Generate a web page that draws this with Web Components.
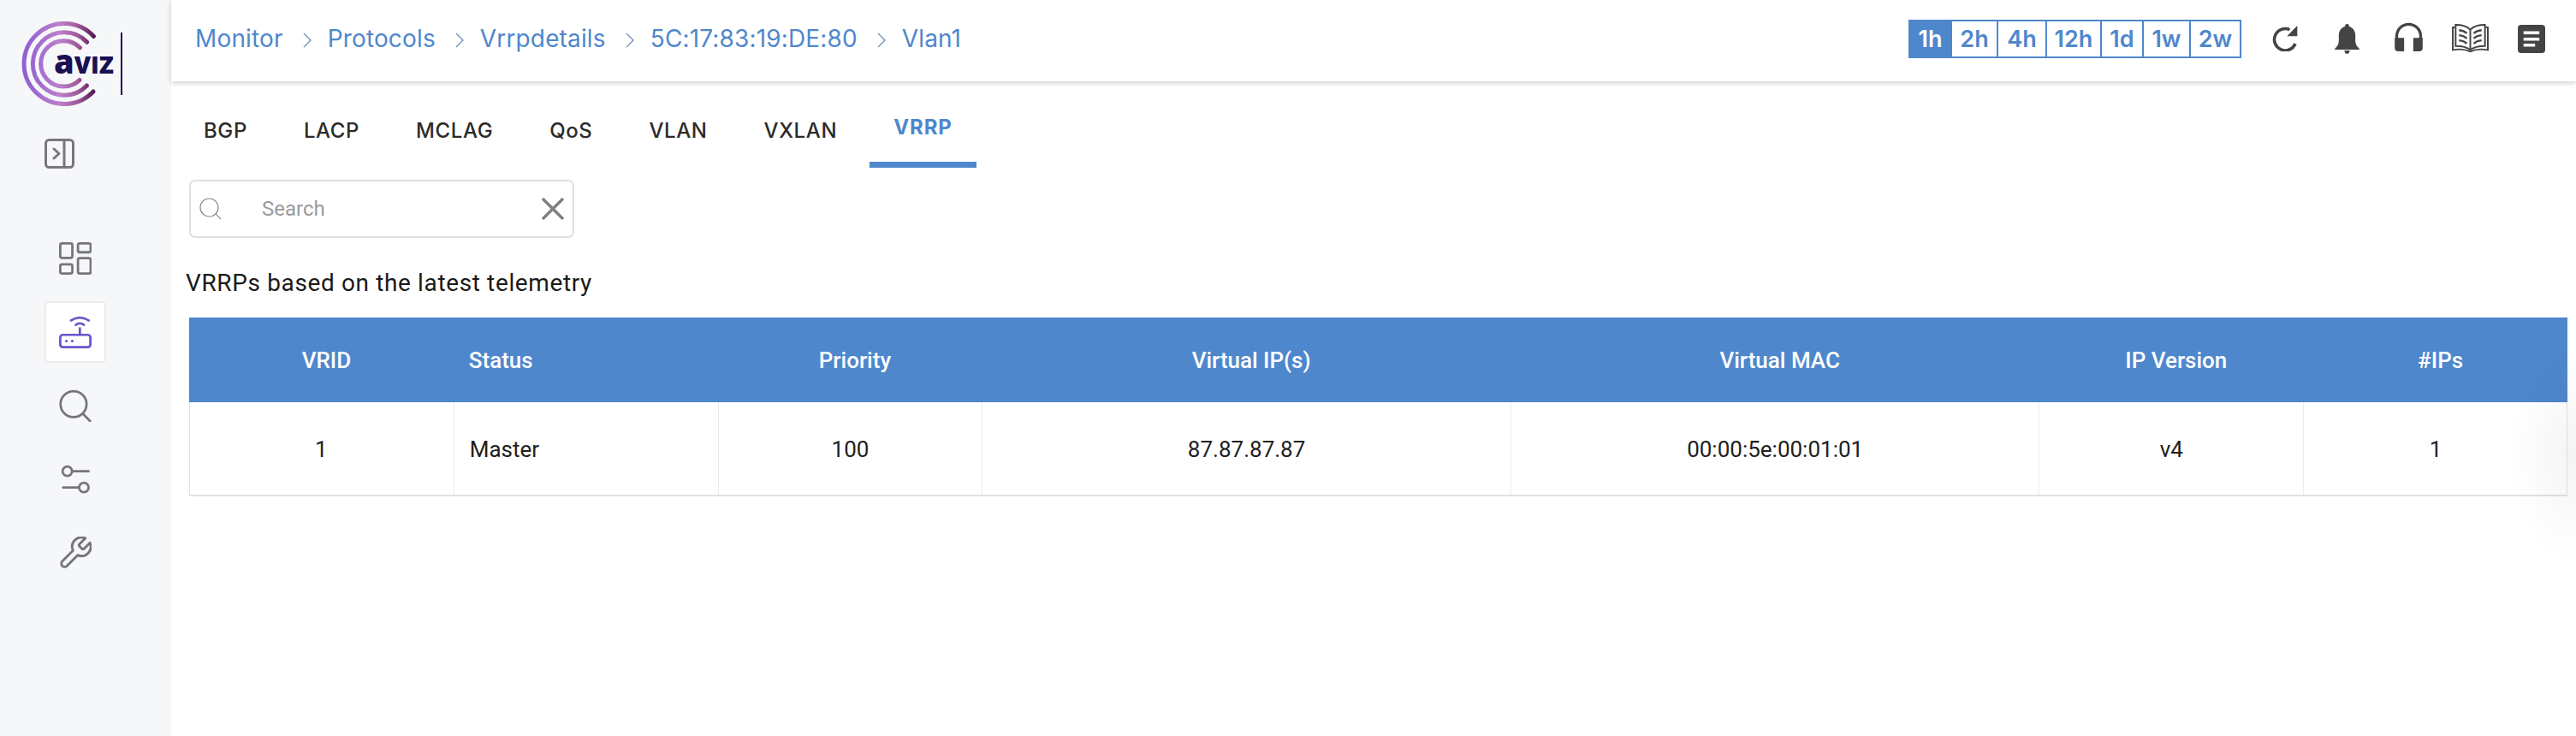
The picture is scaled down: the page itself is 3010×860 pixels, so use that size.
<!DOCTYPE html>
<html lang="en">
<head>
<meta charset="utf-8">
<title>VRRP</title>
<style>
  html, body { margin: 0; height: 100%; background: #fff; overflow: hidden; }
</style>
</head>
<body>
<app-shell>
  <side-bar slot="side"></side-bar>
  <top-bar slot="top"></top-bar>
  <proto-tabs></proto-tabs>
  <search-box></search-box>
  <h-line>VRRPs based on the latest telemetry</h-line>
  <vrrp-table></vrrp-table>
</app-shell>

<script>
class AppShell extends HTMLElement {
  constructor() {
    super();
    this.shadowDOM = this.attachShadow({ mode: "open" });
  }
  connectedCallback() {
    this.shadowDOM.innerHTML = `
    <style>
      :host { display: flex; width: 100%; height: 860px; overflow: hidden; }
      .side { flex: 0 0 200px; }
      .main { flex: 1; min-width: 0; display: flex; flex-direction: column; position: relative; }
      .content { flex: 1; position: relative; }
      .edge {
        position: absolute; top: 0; right: 0; bottom: 0; width: 140px;
        background: radial-gradient(80px 130px at 100% 435px, rgba(0,0,0,0.045), rgba(0,0,0,0));
        pointer-events: none;
      }
    </style>
    <div class="side"><slot name="side"></slot></div>
    <div class="main">
      <slot name="top"></slot>
      <div class="content"><slot></slot><div class="edge"></div></div>
    </div>`;
  }
}

class SideBar extends HTMLElement {
  constructor() {
    super();
    this.shadowDOM = this.attachShadow({ mode: "open" });
  }
  connectedCallback() {
    this.shadowDOM.innerHTML = `
    <style>
      :host { display: flex; flex-direction: column; height: 860px; background: #f6f7f9; box-sizing: border-box; }
      .logo { height: 162px; position: relative; flex: none; }
      .logo svg { position: absolute; left: 0; top: 0; width: 150px; height: 130px; }
      .logo text { font-family: "Open Sans", sans-serif; font-weight: 800; font-size: 38px; fill: #1a1052; }
      .toggle { display: block; width: 35px; height: 35px; margin-left: 52px; flex: none; }
      nav { display: flex; flex-direction: column; gap: 14px; margin: 69px 0 0 52px; }
      .item { width: 72px; height: 72px; box-sizing: border-box; display: flex; align-items: center; justify-content: center; border: 2px solid transparent; border-radius: 5px; color: #75757d; }
      .item.active { background: #fff; border-color: #ebebee; color: #6557cf; }
      .item svg { width: 38px; height: 38px; display: block; fill: none; stroke: currentColor; stroke-linecap: round; stroke-linejoin: round; }
    </style>
    <div class="logo">
      <svg viewBox="0 0 150 130">
        <defs>
          <linearGradient id="arc" gradientUnits="userSpaceOnUse" x1="27" y1="0" x2="112" y2="0">
            <stop offset="0" stop-color="#8f5fd4"/>
            <stop offset="0.5" stop-color="#bd7fcc"/>
            <stop offset="0.75" stop-color="#a05a9c"/>
            <stop offset="1" stop-color="#4c1550"/>
          </linearGradient>
        </defs>
        <g fill="none" stroke="url(#arc)" stroke-width="5" stroke-linecap="round">
          <path d="M109.5 42.5A47 47 0 1 0 109 107"/>
          <path d="M101.7 49.3A36.7 36.7 0 1 0 101.5 100"/>
          <path d="M93.5 55.7A26.7 26.7 0 1 0 93 93.5"/>
        </g>
        <text x="63" y="86">a<tspan style="font-variant: small-caps" font-size="40">viz</tspan></text>
        <rect x="141" y="38" width="2" height="73" fill="#1a1052"/>
      </svg>
    </div>
    <svg class="toggle" viewBox="0 0 35 35" fill="none" stroke="#77777f" stroke-width="3" stroke-linecap="round" stroke-linejoin="round">
      <rect x="1.5" y="1.5" width="32" height="32" rx="4"/>
      <path d="M23 2v31"/>
      <path d="M11 12l6 5.5-6 5.5"/>
    </svg>
    <nav>
      <div class="item"><svg viewBox="208 130 110 110" stroke-width="8">
        <rect x="212" y="134" width="41" height="49" rx="6"/><rect x="272" y="134" width="43" height="30" rx="6"/>
        <rect x="212" y="205" width="41" height="31" rx="6"/><rect x="272" y="184" width="43" height="52" rx="6"/>
      </svg></div>
      <div class="item active"><svg viewBox="207 390 111 111" stroke-width="8">
        <rect x="211" y="455" width="103" height="42" rx="9"/>
        <path d="M278 455v-22"/>
        <path d="M248 406q30-20 60 0"/><path d="M264 421q14-10 28 0"/>
        <path d="M232 476h.1M252 476h.1" stroke-width="9"/>
      </svg></div>
      <div class="item"><svg viewBox="208 648 110 110" stroke-width="8">
        <circle cx="257" cy="698" r="44"/><path d="M290 732l23 23"/>
      </svg></div>
      <div class="item"><svg viewBox="208 906 110 110" stroke-width="8">
        <circle cx="236" cy="934" r="16"/><path d="M252 934h56"/>
        <circle cx="292" cy="989" r="16"/><path d="M222 989h54"/>
      </svg></div>
      <div class="item"><svg viewBox="1.5 1.5 21 21" stroke-width="1.6">
        <path d="M14.7 6.3a1 1 0 0 0 0 1.4l1.6 1.6a1 1 0 0 0 1.4 0l3.77-3.77a6 6 0 0 1-7.94 7.94l-6.91 6.91a2.12 2.12 0 0 1-3-3l6.91-6.91a6 6 0 0 1 7.94-7.94l-3.76 3.76z"/>
      </svg></div>
    </nav>`;
  }
}

class TopBar extends HTMLElement {
  constructor() {
    super();
    this.shadowDOM = this.attachShadow({ mode: "open" });
  }
  connectedCallback() {
    const crumbs = ["Monitor", "Protocols", "Vrrpdetails", "5C:17:83:19:DE:80", "Vlan1"];
    const ranges = ["1h", "2h", "4h", "12h", "1d", "1w", "2w"];
    const chevron = `<svg class="chev" viewBox="0 0 10 20" fill="none" stroke="#7391bb" stroke-width="1.4"><path d="M1 2l8 8-8 8"/></svg>`;
    this.shadowDOM.innerHTML = `
    <style>
      :host { display: flex; align-items: center; height: 95px; box-sizing: border-box; background: #fff; padding: 0 36px 5px 28px; box-shadow: 0 2px 6px rgba(0,0,0,0.18); position: relative; z-index: 2; flex: none; }
      .crumbs { display: flex; align-items: center; flex: 1; font: 400 28px Inter, sans-serif; letter-spacing: 0.15px; color: #4f87cc; }
      .chev { width: 10px; height: 20px; margin: 3px 19px 0 23px; flex: none; }
      .range { display: flex; border: 2px solid #4f87cc; height: 45px; box-sizing: border-box; font: 600 27px Inter, sans-serif; color: #4f87cc; margin-right: 36px; }
      .range span { display: flex; align-items: center; justify-content: center; border-left: 2px solid #4f87cc; box-sizing: border-box; height: 100%; }
      .range span:first-child { border-left: 0; background: #4f87cc; color: #fff; }
      .tools { display: flex; align-items: center; }
      .tools svg { display: block; fill: #444; flex: none; }
      .tools svg.book { fill: none; }
    </style>
    <div class="crumbs">${crumbs.map((c) => `<span>${c}</span>`).join(chevron)}</div>
    <div class="range">${ranges.map((r, i) => `<span style="width:${[47, 54, 57, 64, 49, 55, 59][i]}px">${r}</span>`).join("")}</div>
    <div class="tools">
      <svg width="30" height="30" viewBox="0 0 30 30" style="margin-right:43px"><path d="M20.5 4.7A12.7 12.7 0 1 0 27 21" fill="none" stroke="#444" stroke-width="3.6"/><path d="M29.3 0v12.3H17.300z"/></svg>
      <svg width="29" height="35" viewBox="0 0 86 105" style="margin-right:41px"><path d="M43 0c5 0 8 4 7 9c14 4 22 16 22 30v20c0 12 6 20 14 28v3H0v-3c8-8 14-16 14-28V39c0-14 8-26 22-30c-1-5 2-9 7-9z"/><path d="M33 93h20l-4 10q-6 3-12 0z"/></svg>
      <svg width="33" height="34" viewBox="0 0 98 102" style="margin:-4px 34px 0 0"><path d="M7 60V49a42 42 0 0 1 84 0V60" fill="none" stroke="#444" stroke-width="10"/><path d="M0 55h33v47H13Q0 102 0 89zM98 55H65v47h20q13 0 13-13z"/></svg>
      <svg class="book" width="43" height="33" viewBox="0 0 128 100" style="margin:-2px 34px 0 0" stroke="#444" stroke-width="6"><path d="M10 12H2V92C25 88 48 90 64 98C80 90 103 88 126 92V12H118"/><path d="M64 20C52 8 35 3 12 3V78C35 78 52 82 64 92C76 82 93 78 116 78V3C93 3 76 8 64 20Z"/><path d="M64 20V92"/><path d="M24 22C35 23 45 27 52 33M24 40C35 41 45 45 52 51M24 58C35 59 45 63 52 69M104 22C93 23 83 27 76 33M104 40C93 41 83 45 76 51M104 58C93 59 83 63 76 69" stroke-width="7"/></svg>
      <svg width="32" height="33" viewBox="0 0 32 33"><rect width="32" height="33" rx="4"/><rect x="6.700" y="7.500" width="18.500" height="3.600" fill="#fff"/><rect x="6.700" y="15" width="18.500" height="3.500" fill="#fff"/><rect x="6.700" y="22" width="13.500" height="3.500" fill="#fff"/></svg>
    </div>`;
  }
}

class ProtoTabs extends HTMLElement {
  constructor() {
    super();
    this.shadowDOM = this.attachShadow({ mode: "open" });
  }
  connectedCallback() {
    const tabs = ["BGP", "LACP", "MCLAG", "QoS", "VLAN", "VXLAN", "VRRP"];
    this.shadowDOM.innerHTML = `
    <style>
      :host { display: flex; gap: 10px; height: 101px; padding-left: 10px; box-sizing: border-box; font: 500 24px Inter, sans-serif; letter-spacing: 0.6px; color: #2b2b2b; }
      span { padding: 13px 28px 0; display: flex; align-items: center; height: 101px; box-sizing: border-box; }
      .on { color: #4f87cc; font-weight: 700; border-bottom: 7px solid #4f87cc; letter-spacing: 0.9px; }
    </style>
    ${tabs.map((t) => `<span class="${t === "VRRP" ? "on" : ""}">${t}</span>`).join("")}`;
  }
}

class SearchBox extends HTMLElement {
  constructor() {
    super();
    this.shadowDOM = this.attachShadow({ mode: "open" });
  }
  connectedCallback() {
    this.shadowDOM.innerHTML = `
    <style>
      :host { display: flex; align-items: center; width: 450px; height: 68px; margin: 14px 0 0 21px; box-sizing: border-box; border: 2px solid #e0e0e0; border-radius: 7px; font: 400 24px Roboto, sans-serif; color: #9a9a9a; padding: 0 10px 0 10px; }
      .glass { width: 26px; height: 26px; flex: none; }
      .ph { margin-left: 47px; flex: 1; }
      .x { width: 26px; height: 26px; flex: none; }
    </style>
    <svg class="glass" viewBox="0 0 26 26" fill="none" stroke="#8c8c8c" stroke-width="1.2"><circle cx="11.500" cy="11.500" r="10.500"/><path d="M19 19l6 6"/></svg>
    <span class="ph">Search</span>
    <svg class="x" viewBox="0 0 26 26" fill="none" stroke="#808080" stroke-width="3.400"><path d="M1 1l24 24M25 1L1 25"/></svg>`;
  }
}

class HLine extends HTMLElement {
  constructor() {
    super();
    this.shadowDOM = this.attachShadow({ mode: "open" });
    this.shadowDOM.innerHTML = `
    <style>
      :host { display: block; margin: 34px 0 0 17px; font: 400 28px/38px Roboto, sans-serif; letter-spacing: 0.63px; color: #1a1a1a; }
    </style>
    <slot></slot>`;
  }
}

class VrrpTable extends HTMLElement {
  constructor() {
    super();
    this.shadowDOM = this.attachShadow({ mode: "open" });
  }
  connectedCallback() {
    const head = ["VRID", "Status", "Priority", "Virtual IP(s)", "Virtual MAC", "IP Version", "#IPs"];
    const row = ["1", "Master", "100", "87.87.87.87", "00:00:5e:00:01:01", "v4", "1"];
    this.shadowDOM.innerHTML = `
    <style>
      :host { display: block; margin: 21px 10px 0 21px; font: 400 26px Roboto, sans-serif; color: #212121; }
      .row { display: grid; grid-template-columns: 1fr 1fr 1fr 2fr 2fr 1fr 1fr; }
      .head { background: #4f87cc; height: 99px; color: #fff; font-weight: 500; }
      .head div { display: flex; align-items: center; justify-content: center; padding-left: 12px; }
      .body { height: 110px; border-bottom: 2px solid #e2e2e2; box-shadow: inset 1px 0 #e4e4e4, inset -1px 0 #e4e4e4; box-sizing: border-box; }
      .body div { display: flex; align-items: center; justify-content: center; border-left: 1px solid #ececec; padding-top: 2px; }
      .body div:first-child { border-left: 0; }
      .row div.left { justify-content: flex-start; padding-left: 18px; }
    </style>
    <div class="row head">${head.map((h, i) => `<div class="${i === 1 ? "left" : ""}">${h}</div>`).join("")}</div>
    <div class="row body">${row.map((c, i) => `<div class="${i === 1 ? "left" : ""}">${c}</div>`).join("")}</div>`;
  }
}

customElements.define("app-shell", AppShell);
customElements.define("side-bar", SideBar);
customElements.define("top-bar", TopBar);
customElements.define("proto-tabs", ProtoTabs);
customElements.define("search-box", SearchBox);
customElements.define("h-line", HLine);
customElements.define("vrrp-table", VrrpTable);
</script>
</body>
</html>
